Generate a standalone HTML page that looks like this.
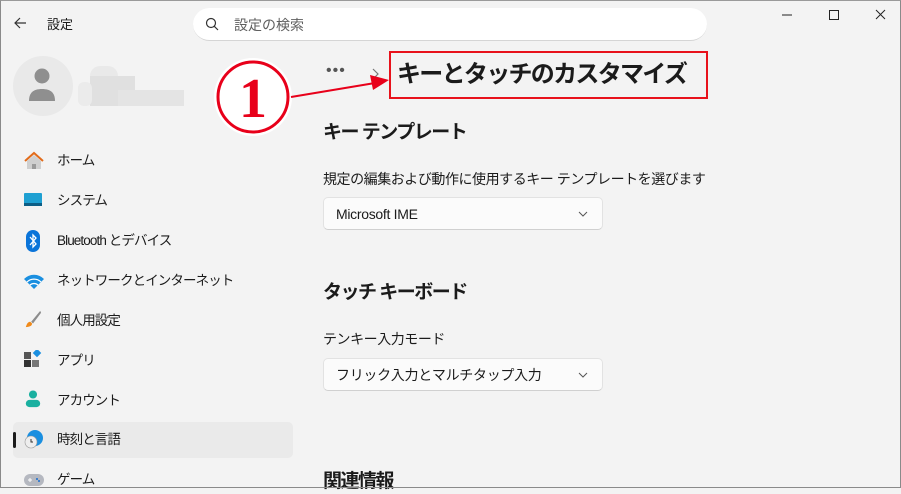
<!DOCTYPE html>
<html><head><meta charset="utf-8"><style>
*{margin:0;padding:0;box-sizing:border-box}
body{width:901px;height:488px;overflow:hidden;background:#f3f3f3;font-family:"Liberation Sans","Noto Sans CJK JP",sans-serif;color:#1b1b1b;position:relative}
.frame{position:absolute;inset:0;border:1px solid #8a8a8a;border-top-color:#9a9a9a;pointer-events:none;z-index:9}
.abs{position:absolute}
.nav{position:absolute;left:57px;font-size:13.5px;color:#1b1b1b;line-height:20px;letter-spacing:-0.9px}
.ic{position:absolute;left:24px;width:18px;height:18px}
.dd{position:absolute;left:323px;width:280px;height:33px;background:#fbfbfb;border:1px solid #e2e2e2;border-bottom-color:#d0d0d0;border-radius:5px;font-size:14px;padding:8px 12px;line-height:16px;letter-spacing:-0.3px}
.dd svg{position:absolute;right:14px;top:13px}
h2{position:absolute;left:323px;font-size:19px;font-weight:bold;line-height:24px;letter-spacing:-1.5px}
.lbl{position:absolute;left:323px;font-size:14px;line-height:18px;letter-spacing:-0.45px}
</style></head><body>
<div class="frame"></div>
<svg class="abs" style="left:13px;top:16px" width="14" height="14" viewBox="0 0 14 14"><path d="M13 7H2M7 2L2 7l5 5" fill="none" stroke="#333" stroke-width="1.2"/></svg>
<div class="abs" style="left:47px;top:14px;font-size:13px">設定</div>
<div class="abs" style="left:193px;top:8px;width:514px;height:33px;background:#fff;border-radius:17px;border-bottom:1px solid #d5d5d5"></div>
<svg class="abs" style="left:205px;top:17px" width="14" height="14" viewBox="0 0 14 14"><circle cx="6" cy="6" r="4.5" fill="none" stroke="#333" stroke-width="1.2"/><path d="M9.3 9.3L13 13" stroke="#333" stroke-width="1.2"/></svg>
<div class="abs" style="left:234px;top:15px;font-size:14px;color:#5f5f5f">設定の検索</div>
<svg class="abs" style="left:780px;top:8px" width="110" height="20"><path d="M2 7h10" stroke="#222"/><rect x="49.5" y="2.5" width="9" height="9" fill="none" stroke="#222"/><path d="M96 2l9 9M105 2l-9 9" stroke="#222"/></svg>
<div class="abs" style="left:13px;top:56px;width:60px;height:60px;border-radius:50%;background:#e9e9e9"></div>
<svg class="abs" style="left:27px;top:67px" width="30" height="36"><circle cx="15" cy="9" r="7.5" fill="#8f8f8f"/><path d="M2 34c0-8 4-12 13-12s13 4 13 12z" fill="#8f8f8f"/></svg>
<div class="abs" style="left:78px;top:66px;width:106px;height:40px;opacity:.4">
<div class="abs" style="left:12px;top:0;width:28px;height:40px;background:#dcdcdc;border-radius:10px"></div>
<div class="abs" style="left:12px;top:10px;width:45px;height:30px;background:#c4c4c4"></div>
<div class="abs" style="left:40px;top:24px;width:66px;height:16px;background:#cfcfcf"></div>
<div class="abs" style="left:0;top:16px;width:14px;height:24px;background:#e0e0e0;border-radius:6px"></div>
</div>
<svg class="ic" style="top:151px;width:20px;height:20px" viewBox="0 0 20 20"><path d="M3 10v8h14v-8L10 4z" fill="#cfcfcf"/><path d="M8 18v-5h4v5z" fill="#9a9a9a"/><path d="M1 10l9-8 9 8" fill="none" stroke="#e26b1a" stroke-width="2"/></svg>
<div class="nav" style="top:151px">ホーム</div>
<svg class="ic" style="top:193px;height:14px" viewBox="0 0 18 14"><rect x="0" y="0" width="18" height="12" rx="1" fill="#1ea0d2"/><rect x="0" y="10" width="18" height="3" fill="#0c5e86"/></svg>
<div class="nav" style="top:191px">システム</div>
<svg class="ic" style="top:230px;left:26px;width:14px;height:22px" viewBox="0 0 14 22"><rect width="14" height="22" rx="7" fill="#0a74d9"/><path d="M4 7l6 7-3 3V5l3 3-6 7" fill="none" stroke="#fff" stroke-width="1.3"/></svg>
<div class="nav" style="top:231px">Bluetooth とデバイス</div>
<svg class="ic" style="top:273px;width:20px" viewBox="0 0 20 16"><path d="M0 5a14 14 0 0 1 20 0L10 15z" fill="#1a8fe0"/><path d="M3 8a10 10 0 0 1 14 0" stroke="#fff" stroke-width="1.2" fill="none"/><path d="M6 11a6 6 0 0 1 8 0" stroke="#fff" stroke-width="1.2" fill="none"/></svg>
<div class="nav" style="top:271px">ネットワークとインターネット</div>
<svg class="ic" style="top:310px" viewBox="0 0 18 20"><path d="M17 1L7 13l2 2L18 3z" fill="#8c8c8c"/><path d="M6 13c-3 0-4 3-5 6 3 0 7-1 7-4z" fill="#f08a1a"/></svg>
<div class="nav" style="top:311px">個人用設定</div>
<svg class="ic" style="top:350px" viewBox="0 0 18 18"><rect x="0" y="2" width="7" height="7" fill="#555"/><rect x="0" y="10" width="7" height="7" fill="#333"/><rect x="8" y="10" width="7" height="7" fill="#777"/><rect x="10" y="0" width="6" height="6" fill="#1a8fe0" transform="rotate(45 13 3)"/></svg>
<div class="nav" style="top:351px">アプリ</div>
<svg class="ic" style="top:390px" viewBox="0 0 18 20"><circle cx="9" cy="5" r="4.5" fill="#1ab0a0"/><rect x="1" y="11" width="16" height="8" rx="4" fill="#1ab0a0"/></svg>
<div class="nav" style="top:391px">アカウント</div>
<div class="abs" style="left:13px;top:422px;width:280px;height:36px;background:#eaeaea;border-radius:5px"></div>
<div class="abs" style="left:13px;top:432px;width:3px;height:16px;background:#1b1b1b;border-radius:2px"></div>
<svg class="ic" style="top:429px;width:20px;height:20px" viewBox="0 0 20 20"><circle cx="11" cy="9" r="8" fill="#1a8fe0"/><circle cx="7" cy="13" r="6" fill="#eee" stroke="#999" stroke-width=".6"/><path d="M7 10v3h2" stroke="#333" fill="none"/></svg>
<div class="nav" style="top:430px">時刻と言語</div>
<svg class="ic" style="top:472px;width:20px" viewBox="0 0 20 14"><rect width="20" height="12" rx="6" fill="#b5b8c0"/><path d="M4 6h4M6 4v4" stroke="#fff"/><circle cx="13" cy="5" r="1" fill="#1a6fd0"/><circle cx="15" cy="7" r="1" fill="#1a6fd0"/></svg>
<div class="nav" style="top:470px">ゲーム</div>
<div class="abs" style="left:326px;top:62px;font-size:16px;color:#555;letter-spacing:1px">•••</div>
<svg class="abs" style="left:372px;top:68px" width="8" height="12"><path d="M1 1l5 5-5 5" fill="none" stroke="#777" stroke-width="1.2"/></svg>
<div class="abs" style="left:389px;top:51px;width:319px;height:48px;border:2px solid #e8121b"></div>
<div class="abs" style="left:397px;top:58px;font-size:24px;font-weight:bold;line-height:34px;letter-spacing:-1.7px">キーとタッチのカスタマイズ</div>
<svg class="abs" style="left:205px;top:55px" width="190" height="90"><circle cx="48" cy="42" r="39" fill="#fff"/><circle cx="48" cy="42" r="35" fill="none" stroke="#e8001a" stroke-width="3"/><line x1="86" y1="42" x2="170" y2="28" stroke="#e8001a" stroke-width="2"/><path d="M184 25l-19-5 3 15z" fill="#e8001a"/><text x="48" y="62" text-anchor="middle" font-family="Liberation Serif,serif" font-weight="bold" font-size="56" fill="#e8001a">1</text></svg>
<h2 style="top:121px">キー テンプレート</h2>
<div class="lbl" style="top:170px">規定の編集および動作に使用するキー テンプレートを選びます</div>
<div class="dd" style="top:197px">Microsoft IME<svg width="10" height="6"><path d="M1 1l4 4 4-4" fill="none" stroke="#555"/></svg></div>
<h2 style="top:281px">タッチ キーボード</h2>
<div class="lbl" style="top:330px">テンキー入力モード</div>
<div class="dd" style="top:358px">フリック入力とマルチタップ入力<svg width="10" height="6"><path d="M1 1l4 4 4-4" fill="none" stroke="#555"/></svg></div>
<h2 style="top:470px">関連情報</h2>
</body></html>
